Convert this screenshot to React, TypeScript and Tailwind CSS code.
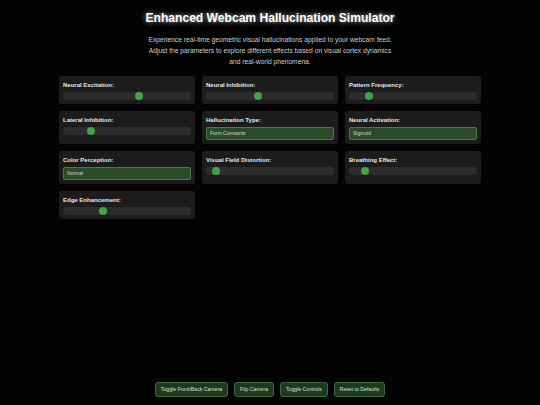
import React from "react";

type Ctrl =
  | { kind: "slider"; label: string; value: number }
  | { kind: "select"; label: string; value: string };

const controls: Ctrl[] = [
  { kind: "slider", label: "Neural Excitation:", value: 60 },
  { kind: "slider", label: "Neural Inhibition:", value: 40 },
  { kind: "slider", label: "Pattern Frequency:", value: 13 },
  { kind: "slider", label: "Lateral Inhibition:", value: 20 },
  { kind: "select", label: "Hallucination Type:", value: "Form Constants" },
  { kind: "select", label: "Neural Activation:", value: "Sigmoid" },
  { kind: "select", label: "Color Perception:", value: "Normal" },
  { kind: "slider", label: "Visual Field Distortion:", value: 5 },
  { kind: "slider", label: "Breathing Effect:", value: 10 },
  { kind: "slider", label: "Edge Enhancement:", value: 30 },
];

function Card({ c }: { c: Ctrl }) {
  return (
    <div className="flex flex-col rounded-[3px] bg-[#1c1c1c] px-[4px] pt-[5px] pb-[4px]">
      <label className="text-[6px] leading-[8px] font-bold text-[#e6e6e6]">{c.label}</label>
      {c.kind === "slider" ? (
        <input
          type="range"
          min={0}
          max={100}
          defaultValue={c.value}
          className="mt-[3px] h-[8px] w-full appearance-none rounded-[3px] bg-[#2c2c2c] outline-none [&::-webkit-slider-thumb]:h-[8px] [&::-webkit-slider-thumb]:w-[8px] [&::-webkit-slider-thumb]:appearance-none [&::-webkit-slider-thumb]:rounded-full [&::-webkit-slider-thumb]:bg-[#45a349]"
        />
      ) : (
        <select
          defaultValue={c.value}
          className="mt-[3px] h-[13px] w-full appearance-none rounded-[2px] border border-[#4a7a4a] bg-[#2a4a2a] pl-[3px] text-[5px] leading-[11px] text-[#cfd8cf] outline-none"
        >
          <option>{c.value}</option>
        </select>
      )}
    </div>
  );
}

export default function App() {
  const buttons = ["Toggle Front/Back Camera", "Flip Camera", "Toggle Controls", "Reset to Defaults"];
  return (
    <div
      className="flex h-screen w-full flex-col items-center bg-[#030303] text-white"
      style={{ fontFamily: '"Liberation Sans", Arial, sans-serif' }}
    >
      <h1 className="mt-[10px] text-[12.1px] leading-[16px] font-bold text-white [text-shadow:0_0_5px_rgba(255,255,255,0.75)]">
        Enhanced Webcam Hallucination Simulator
      </h1>
      <p className="mt-[8px] text-center text-[6.7px] leading-[11.2px] text-[#cccccc]">
        Experience real-time geometric visual hallucinations applied to your webcam feed.
        <br />
        Adjust the parameters to explore different effects based on visual cortex dynamics
        <br />
        and real-world phenomena.
      </p>
      <div className="mt-[8px] grid w-[422px] grid-cols-3 gap-[7px]">
        {controls.map((c) => (
          <Card key={c.label} c={c} />
        ))}
      </div>
      <div className="mt-auto mb-[8px] flex gap-[6px]">
        {buttons.map((b) => (
          <button
            key={b}
            className="h-[15px] rounded-[3px] border border-[#3d6a3d] bg-[#1e3a1e] px-[5px] text-[5.15px] leading-[13px] text-[#d5e0d5]"
          >
            {b}
          </button>
        ))}
      </div>
    </div>
  );
}
